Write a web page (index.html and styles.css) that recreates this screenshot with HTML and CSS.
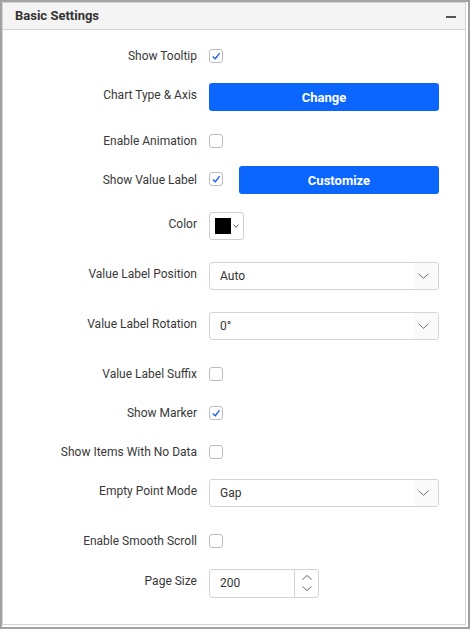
FILE: index.html
```html
<!DOCTYPE html>
<html>
<head>
<meta charset="utf-8">
<link rel="stylesheet" href="styles.css">
</head>
<body>
<div class="frame">
  <section class="panel">
    <header class="panel-head">
      <span class="title">Basic Settings</span>
      <span class="collapse"></span>
    </header>
    <div class="panel-body">
      <div class="row"><span class="lbl">Show Tooltip</span><span class="check"><svg viewBox="0 0 14 14"><path d="M3.2 7.6 L6.2 10.2 L11.2 3.6"/></svg></span></div>
      <div class="row tall g20"><span class="lbl">Chart Type &amp; Axis</span><button class="btn">Change</button></div>
      <div class="row g23"><span class="lbl">Enable Animation</span><span class="check off"></span></div>
      <div class="row tall mixed g18"><span class="lbl">Show Value Label</span><span class="check up"><svg viewBox="0 0 14 14"><path d="M3.2 7.6 L6.2 10.2 L11.2 3.6"/></svg></span><button class="btn narrow">Customize</button></div>
      <div class="row tall g18"><span class="lbl">Color</span><span class="picker"><span class="swatch"></span><svg class="pk-arrow" viewBox="0 0 6 4"><path d="M0.5 0.8 L3 3.2 L5.5 0.8"/></svg></span></div>
      <div class="row tall g22"><span class="lbl">Value Label Position</span><span class="select"><span class="sel-text">Auto</span><span class="sel-icon"><svg viewBox="0 0 12 6"><path d="M0.5 0.5 L6 5.5 L11.5 0.5"/></svg></span></span></div>
      <div class="row tall g22"><span class="lbl">Value Label Rotation</span><span class="select"><span class="sel-text">0°</span><span class="sel-icon"><svg viewBox="0 0 12 6"><path d="M0.5 0.5 L6 5.5 L11.5 0.5"/></svg></span></span></div>
      <div class="row g27"><span class="lbl">Value Label Suffix</span><span class="check off"></span></div>
      <div class="row g25"><span class="lbl">Show Marker</span><span class="check"><svg viewBox="0 0 14 14"><path d="M3.2 7.6 L6.2 10.2 L11.2 3.6"/></svg></span></div>
      <div class="row g25"><span class="lbl">Show Items With No Data</span><span class="check off"></span></div>
      <div class="row tall g20"><span class="lbl">Empty Point Mode</span><span class="select"><span class="sel-text">Gap</span><span class="sel-icon"><svg viewBox="0 0 12 6"><path d="M0.5 0.5 L6 5.5 L11.5 0.5"/></svg></span></span></div>
      <div class="row g27"><span class="lbl">Enable Smooth Scroll</span><span class="check off"></span></div>
      <div class="row tall g21"><span class="lbl">Page Size</span><span class="spin"><span class="spin-text">200</span><span class="spin-btns"><svg viewBox="0 0 10 5"><path d="M0.5 4.5 L5 0.5 L9.5 4.5"/></svg><svg viewBox="0 0 10 5"><path d="M0.5 0.5 L5 4.5 L9.5 0.5"/></svg></span></span></div>
    </div>
  </section>
</div>
</body>
</html>
```
FILE: styles.css
```css
* { box-sizing: border-box; }
html, body { margin: 0; padding: 0; background: #fff; }
body { font-family: Roboto, "Liberation Sans", Arial, sans-serif; color: #333; }

.frame {
  width: 470px;
  height: 629px;
  border: 2px solid #a2a2a2;
  padding: 0 2px 2px 0;
  background: #fff;
}

.panel {
  width: 464px;
  height: 623px;
  border: 1px solid #d4d4d4;
  background: #fff;
}

.panel-head {
  height: 27px;
  background: #f4f4f4;
  border-bottom: 1px solid #d4d4d4;
  display: flex;
  align-items: center;
  justify-content: space-between;
  padding: 0 9px 0 12px;
}
.title {
  font-size: 13px;
  font-weight: 700;
  color: #333;
  line-height: 16px;
}
.collapse {
  width: 10px;
  height: 2px;
  background: #555;
  margin-top: 1px;
}

.panel-body {
  padding-top: 19px;
  display: flex;
  flex-direction: column;
}

.row {
  display: flex;
  align-items: center;
  height: 14px;
}
.row.tall { height: 28px; }
.g18 { margin-top: 18px; }
.g20 { margin-top: 20px; }
.g21 { margin-top: 21px; }
.g22 { margin-top: 22px; }
.g23 { margin-top: 23px; }
.g25 { margin-top: 25px; }
.g27 { margin-top: 27px; }

.lbl {
  width: 194px;
  flex: none;
  text-align: right;
  font-size: 12px;
  line-height: 14px;
  color: #383838;
  margin-right: 12px;
}
.row.tall .lbl { margin-top: -4px; }
.row.tall.mixed .lbl { margin-top: 0; }

.check {
  width: 14px;
  height: 14px;
  flex: none;
  border: 1px solid #bdbdbd;
  border-radius: 3px;
  background: #fff;
  display: flex;
}
.check svg { width: 12px; height: 12px; }
.check svg path { fill: none; stroke: #1a5cf0; stroke-width: 1.5; }
.check.up { margin-top: -3px; }

.btn {
  width: 230px;
  height: 28px;
  flex: none;
  border: none;
  border-radius: 3px;
  background: #0a66ff;
  color: #fff;
  font-family: Roboto, "Liberation Sans", Arial, sans-serif;
  font-size: 13px;
  font-weight: 700;
  padding: 0;
}
.btn.narrow { width: 200px; margin-left: 16px; }

.picker {
  width: 35px;
  height: 28px;
  border: 1px solid #cfcfcf;
  border-radius: 3px;
  display: flex;
  align-items: center;
  padding-left: 5px;
}
.swatch { width: 16px; height: 16px; background: #000; }
.pk-arrow { width: 6px; height: 4px; margin-left: 2px; }
.pk-arrow path { fill: none; stroke: #555; stroke-width: 1; }

.select {
  width: 230px;
  height: 28px;
  border: 1px solid #d4d4d4;
  border-radius: 3px;
  display: flex;
  align-items: center;
  background: #fff;
  overflow: hidden;
}
.sel-text {
  flex: 1;
  padding-left: 10px;
  font-size: 12px;
  color: #333;
}
.sel-icon {
  width: 24px;
  height: 100%;
  background: #fafafa;
  display: flex;
  align-items: center;
  justify-content: flex-start;
  padding-left: 4px;
}
.sel-icon svg { width: 11px; height: 6px; }
.sel-icon path { fill: none; stroke: #666; stroke-width: 1; }

.spin {
  width: 110px;
  height: 29px;
  border: 1px solid #d4d4d4;
  border-radius: 3px;
  display: flex;
  align-items: center;
}
.spin-text {
  flex: 1;
  padding-left: 10px;
  font-size: 12px;
  color: #333;
}
.spin-btns {
  width: 24px;
  height: 100%;
  border-left: 1px solid #d4d4d4;
  display: flex;
  flex-direction: column;
  align-items: center;
  justify-content: center;
  gap: 6px;
}
.spin-btns svg { width: 10px; height: 5px; }
.spin-btns path { fill: none; stroke: #666; stroke-width: 1; }
```
